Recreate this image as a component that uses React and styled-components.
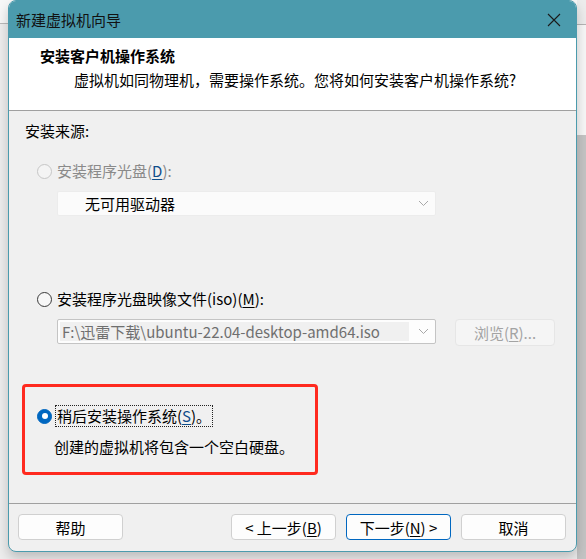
import React from "react";
import styled, { createGlobalStyle } from "styled-components";

const GlobalStyle = createGlobalStyle`
  html, body {
    margin: 0;
    padding: 0;
    width: 586px;
    height: 559px;
    overflow: hidden;
  }
  body {
    font-family: "Noto Sans CJK SC", "Noto Sans", sans-serif;
  }
`;

const Page = styled.div`
  height: 559px;
  display: flex;
  padding: 0 0 0 8px;
  box-sizing: border-box;
  background:
    linear-gradient(to bottom, #ececec 0 24px, #b4b4b4 24px 25px, #f7f7f7 25px 135px, #c4c4c4 135px) right top / 9px 100% no-repeat,
    linear-gradient(to bottom, #f7f7f7 0 23px, #b9b9b9 23px 24px, #ededed 24px);
`;

const Dialog = styled.div`
  width: 567px;
  height: 550px;
  display: flex;
  flex-direction: column;
  border: 1px solid #4b9bad;
  border-radius: 8px;
  overflow: hidden;
  background: #f0f0f0;
  box-shadow: 0 6px 12px rgba(0, 0, 0, 0.2);
`;

const TitleBar = styled.div`
  height: 37px;
  flex-shrink: 0;
  display: flex;
  align-items: center;
  justify-content: space-between;
  background: #4b9bad;
  padding: 0 0 0 7px;
  color: #111;
  font-size: 15px;
`;

const CloseButton = styled.div`
  width: 44px;
  height: 37px;
  display: flex;
  align-items: center;
  justify-content: center;
`;

const Header = styled.div`
  flex-shrink: 0;
  background: #ffffff;
  border-bottom: 1px solid #a0a0a0;
  padding: 7px 0 0 31px;
  box-sizing: border-box;
  height: 73px;
`;

const Heading = styled.div`
  font-size: 15px;
  font-weight: bold;
  line-height: 22px;
  color: #000;
`;

const SubText = styled.div`
  font-size: 15px;
  line-height: 22px;
  margin: 2px 0 0 34px;
  color: #000;
`;

const Body = styled.div`
  flex: 1;
  display: flex;
  flex-direction: column;
  padding: 10px 0 0 16px;
  font-size: 15px;
  color: #000;
`;

const Line = styled.div`
  line-height: 20px;
  margin-top: ${({ $top }) => $top || 0}px;
  margin-left: ${({ $left }) => $left || 0}px;
  color: ${({ $muted }) => ($muted ? "#8a8a8a" : "#000")};
`;

const RadioRow = styled.div`
  display: flex;
  align-items: center;
  gap: 5px;
  margin-top: ${({ $top }) => $top || 0}px;
  margin-left: ${({ $left }) => $left || 0}px;
  line-height: 20px;
  color: ${({ $muted }) => ($muted ? "#8a8a8a" : "#000")};
`;

const RadioDot = styled.span`
  width: 15px;
  height: 15px;
  box-sizing: border-box;
  border-radius: 50%;
  flex-shrink: 0;
  display: flex;
  align-items: center;
  justify-content: center;
  border: 1px solid
    ${({ $state }) =>
      $state === "disabled" ? "#c6c6c6" : $state === "checked" ? "#0067c0" : "#3a3a3a"};
  background: ${({ $state }) =>
    $state === "disabled" ? "#f4f4f4" : $state === "checked" ? "#0067c0" : "#f7f7f7"};
  &::after {
    content: "";
    display: ${({ $state }) => ($state === "checked" ? "block" : "none")};
    width: 6px;
    height: 6px;
    border-radius: 50%;
    background: #fff;
  }
`;

const Mnemonic = styled.span`
  text-decoration: underline;
  text-underline-offset: 2px;
  color: ${({ $blue }) => ($blue ? "#0f4d8a" : "inherit")};
`;

const FocusLabel = styled.span`
  outline: 1px dotted #222;
  outline-offset: 0px;
  padding: 0 1px;
  margin-left: -1px;
`;

const Row = styled.div`
  display: flex;
  align-items: flex-start;
  margin-top: ${({ $top }) => $top || 0}px;
  margin-left: ${({ $left }) => $left || 0}px;
`;

const Combo = styled.div`
  width: 379px;
  height: 25px;
  box-sizing: border-box;
  display: flex;
  align-items: center;
  border: 1px solid ${({ $disabled }) => ($disabled ? "#ececec" : "#c4c4c4")};
  background: ${({ $disabled }) => ($disabled ? "#fbfbfb" : "#fdfdfd")};
  border-radius: 2px;
  padding: 0 6px 0 2px;
`;

const ComboText = styled.div`
  flex: 1;
  height: 19px;
  line-height: 19px;
  padding-left: ${({ $indent }) => $indent || 2}px;
  background: ${({ $fill }) => ($fill ? "#f0f0f0" : "transparent")};
  color: ${({ $muted }) => ($muted ? "#6f6f6f" : "#000")};
  margin-right: ${({ $fill }) => ($fill ? 9 : 0)}px;
  white-space: nowrap;
  overflow: hidden;
`;

const BrowseButton = styled.div`
  width: 100px;
  height: 27px;
  box-sizing: border-box;
  margin-left: 19px;
  border: 1px solid #e6e6e6;
  background: #f5f5f5;
  border-radius: 4px;
  color: #a3a3a3;
  display: flex;
  align-items: center;
  justify-content: center;
`;

const Highlight = styled.div`
  width: 296px;
  height: 91px;
  box-sizing: border-box;
  margin: 38px 0 0 -3px;
  border: 3px solid #ff2a1f;
  border-radius: 4px;
  padding: 19px 0 0 12px;
`;

const Footer = styled.div`
  height: 48px;
  flex-shrink: 0;
  border-top: 1px solid #a0a0a0;
  display: flex;
  align-items: flex-start;
  padding: 10px 10px 0 9px;
  box-sizing: border-box;
`;

const ButtonGroup = styled.div`
  display: flex;
  gap: 10px;
  margin-left: auto;
`;

const Button = styled.div`
  width: 105px;
  height: 26px;
  box-sizing: border-box;
  border: 1px solid ${({ $primary }) => ($primary ? "#0067c0" : "#d0d0d0")};
  background: #fdfdfd;
  border-radius: 4px;
  display: flex;
  align-items: center;
  justify-content: center;
  font-size: 15px;
  color: #000;
  white-space: nowrap;
`;

function Chevron() {
  return (
    <svg width="11" height="7" viewBox="0 0 11 7">
      <polyline points="1,1 5.5,5.5 10,1" fill="none" stroke="#a8a8a8" strokeWidth="1" />
    </svg>
  );
}

function CloseIcon() {
  return (
    <svg width="14" height="14" viewBox="0 0 14 14">
      <path d="M1 1 L13 13 M13 1 L1 13" stroke="#1a1a1a" strokeWidth="1.1" />
    </svg>
  );
}

export default function App() {
  return (
    <>
      <GlobalStyle />
      <Page>
        <Dialog>
          <TitleBar>
            <span>新建虚拟机向导</span>
            <CloseButton>
              <CloseIcon />
            </CloseButton>
          </TitleBar>

          <Header>
            <Heading>安装客户机操作系统</Heading>
            <SubText>虚拟机如同物理机，需要操作系统。您将如何安装客户机操作系统?</SubText>
          </Header>

          <Body>
            <Line>安装来源:</Line>

            <RadioRow $top={20} $left={12} $muted>
              <RadioDot $state="disabled" />
              <span>
                安装程序光盘(<Mnemonic $blue>D</Mnemonic>):
              </span>
            </RadioRow>

            <Row $top={10} $left={32}>
              <Combo $disabled>
                <ComboText $indent={25}>无可用驱动器</ComboText>
                <Chevron />
              </Combo>
            </Row>

            <RadioRow $top={73} $left={12}>
              <RadioDot />
              <span>
                安装程序光盘映像文件(iso)(<Mnemonic>M</Mnemonic>):
              </span>
            </RadioRow>

            <Row $top={10} $left={32}>
              <Combo>
                <ComboText $fill $muted>F:\迅雷下载\ubuntu-22.04-desktop-amd64.iso</ComboText>
                <Chevron />
              </Combo>
              <BrowseButton>
                浏览(<Mnemonic>R</Mnemonic>)...
              </BrowseButton>
            </Row>

            <Highlight>
              <RadioRow>
                <RadioDot $state="checked" />
                <FocusLabel>
                  稍后安装操作系统(<Mnemonic $blue>S</Mnemonic>)。
                </FocusLabel>
              </RadioRow>
              <Line $top={11} $left={17}>创建的虚拟机将包含一个空白硬盘。</Line>
            </Highlight>
          </Body>

          <Footer>
            <Button>帮助</Button>
            <ButtonGroup>
              <Button>
                &lt; 上一步(<Mnemonic>B</Mnemonic>)
              </Button>
              <Button $primary>
                下一步(<Mnemonic>N</Mnemonic>) &gt;
              </Button>
              <Button>取消</Button>
            </ButtonGroup>
          </Footer>
        </Dialog>
      </Page>
    </>
  );
}
